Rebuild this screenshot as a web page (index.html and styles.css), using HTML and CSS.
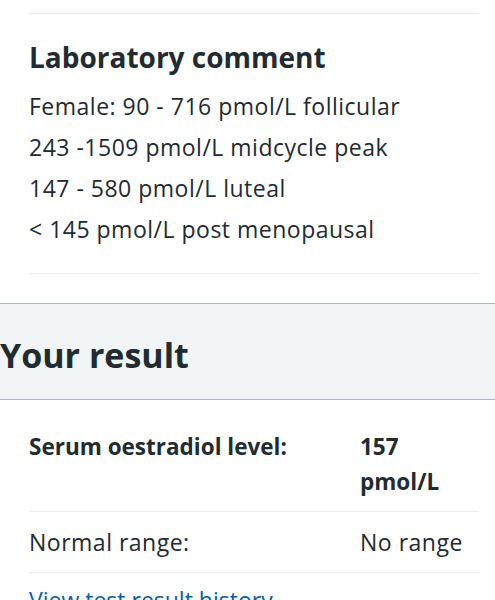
FILE: index.html
```html
<!DOCTYPE html>
<html lang="en">
  <head>
    <meta charset="UTF-8" />
    <meta name="viewport" content="width=device-width, initial-scale=1.0" />
    <title>Test result</title>
    <link rel="stylesheet" href="styles.css">
  </head>
  <body>
    <div class="comment">
      <hr class="rule">
      <h2 class="comment-title">Laboratory comment</h2>
      <p class="comment-line">Female: 90 - 716 pmol/L follicular</p>
      <p class="comment-line">243 -1509 pmol/L midcycle peak</p>
      <p class="comment-line">147 - 580 pmol/L luteal</p>
      <p class="comment-line">&lt; 145 pmol/L post menopausal</p>
      <hr class="rule rule-bottom">
    </div>

    <section class="result">
      <div class="result-head">
        <h2 class="result-title">Your result</h2>
      </div>
      <dl class="summary">
        <div class="summary-row">
          <dt class="summary-key strong">Serum oestradiol level:</dt>
          <dd class="summary-value strong">157 pmol/L</dd>
        </div>
        <div class="summary-row">
          <dt class="summary-key">Normal range:</dt>
          <dd class="summary-value">No range</dd>
        </div>
      </dl>
      <a class="history-link" href="#">View test result history</a>
    </section>
  </body>
</html>
```

FILE: styles.css
```css
* {
  box-sizing: border-box;
}
body {
  margin: 0;
  font-family: "Open Sans", "Noto Sans", Arial, sans-serif;
  font-size: 23px;
  letter-spacing: 0.5px;
  color: #212b32;
  background-color: #fff;
}
.comment {
  padding: 13px 16px 0 29px;
}
.rule {
  margin: 0;
  border: 0;
  border-top: 1px solid #e8edee;
}
.comment-title {
  margin: 25px 0 11px;
  font-size: 28px;
  line-height: 36px;
  font-weight: 700;
  letter-spacing: 0;
}
.comment-line {
  margin: 0;
  line-height: 41px;
}
.rule-bottom {
  margin-top: 23px;
}
.result {
  margin-top: 29px;
}
.result-head {
  background-color: #f0f4f5;
  border-top: 1px solid #aeb7bd;
  border-bottom: 1px solid #aeb7bd;
  padding: 31px 0 24px;
}
.result-title {
  margin: 0;
  font-size: 34px;
  line-height: 40px;
  font-weight: 700;
  letter-spacing: 0;
}
.summary {
  margin: 16px 16px 0 29px;
}
.summary-row {
  display: grid;
  grid-template-columns: 331px 1fr;
  padding: 13px 0 12px;
  border-bottom: 1px solid #e8edee;
  line-height: 35px;
}
.summary-key,
.summary-value {
  margin: 0;
}
.summary-value {
  padding-right: 8px;
}
.strong {
  font-size: 22.5px;
  font-weight: 700;
  letter-spacing: 0;
}
.history-link {
  display: inline-block;
  margin: 10px 0 0 29px;
  line-height: 34px;
  letter-spacing: 0;
  color: #005eb8;
  text-decoration: underline;
}
```
